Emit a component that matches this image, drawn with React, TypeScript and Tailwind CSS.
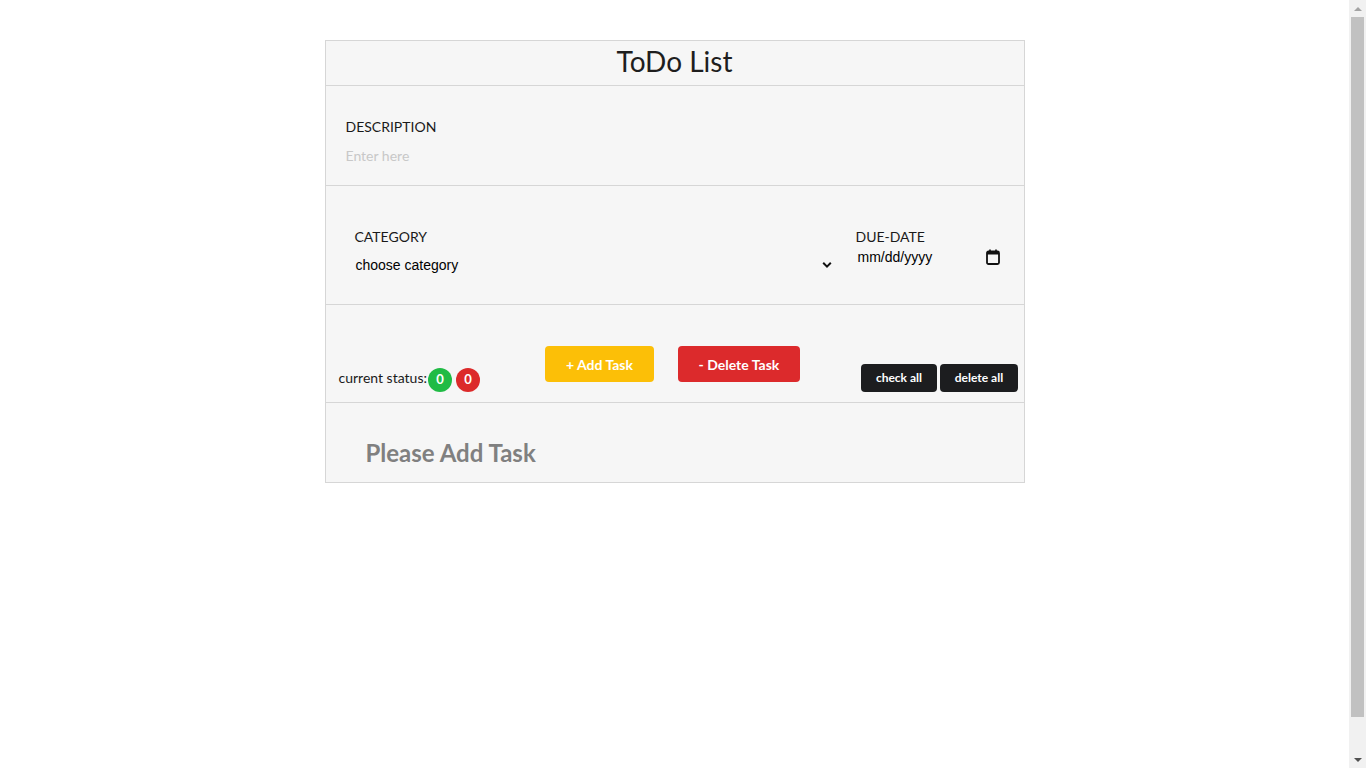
import React from "react";

export default function App() {
  return (
    <div className="flex h-screen overflow-hidden bg-white" style={{ fontFamily: "Lato, 'Liberation Sans', sans-serif" }}>
      <div className="w-[1349px] shrink-0 pt-10">
        <div className="mx-auto w-[700px] border border-[#d6d6d6] bg-[#f6f6f6] text-[#222]">
          {/* Header */}
          <div className="flex h-[45px] items-center justify-center border-b border-[#d6d6d6]">
            <h1 className="-mt-[4px] text-[28px] leading-none text-[#1e1e1e]">ToDo List</h1>
          </div>

          {/* Description */}
          <div className="h-[100px] border-b border-[#d6d6d6] pl-[20px] pt-[31px]">
            <label className="block text-[14px] leading-[20px] text-[#1a1a1a]">DESCRIPTION</label>
            <input
              className="mt-[8px] block h-[20px] w-[640px] bg-transparent text-[14px] outline-none placeholder:text-[#c8c8c8]"
              placeholder="Enter here"
            />
          </div>

          {/* Category / Due date */}
          <div className="flex h-[119px] border-b border-[#d6d6d6] pt-[41px]">
            <div className="ml-[29px] w-[488px]">
              <label className="block text-[14px] leading-[20px] text-[#1a1a1a]">CATEGORY</label>
              <div className="relative mt-[8px] flex h-[20px] items-center">
                <span
                  className="pl-[1px] text-[14px] text-black"
                  style={{ fontFamily: "'Liberation Sans', Arial, sans-serif" }}
                >
                  choose category
                </span>
                <svg
                  className="absolute left-[467px] top-[6px]"
                  width="10"
                  height="8"
                  viewBox="0 0 10 8"
                  fill="none"
                >
                  <path d="M1.2 1.8 L5 5.6 L8.8 1.8" stroke="#111" strokeWidth="2" />
                </svg>
              </div>
            </div>
            <div className="ml-[13px]">
              <label className="block text-[14px] leading-[20px] text-[#1a1a1a]">DUE-DATE</label>
              <div className="flex h-[20px] w-[144px] items-center justify-between">
                <span
                  className="pl-[2px] text-[14px] text-black"
                  style={{ fontFamily: "'Liberation Sans', Arial, sans-serif" }}
                >
                  mm/dd/yyyy
                </span>
                <svg width="14" height="16" viewBox="0 0 14 16" fill="none">
                  <rect x="1" y="2.5" width="12" height="12.5" rx="1.5" stroke="#111" strokeWidth="1.8" />
                  <rect x="1" y="2.5" width="12" height="3" fill="#111" />
                  <rect x="3.2" y="0.5" width="1.6" height="3" fill="#111" />
                  <rect x="9.2" y="0.5" width="1.6" height="3" fill="#111" />
                </svg>
              </div>
            </div>
          </div>

          {/* Buttons row */}
          <div className="flex h-[98px] items-end border-b border-[#d6d6d6] pb-[10px]">
            <div className="ml-[13px] flex items-center">
              <span className="-mt-[5px] text-[14px] text-[#1a1a1a]">current status:</span>
              <span className="ml-[1px] flex h-[24px] w-[24px] items-center justify-center rounded-full bg-[#20bb45] text-[13px] font-bold text-white">
                0
              </span>
              <span className="ml-[4px] flex h-[24px] w-[24px] items-center justify-center rounded-full bg-[#dc2a2a] text-[13px] font-bold text-white">
                0
              </span>
            </div>
            <button className="mb-[10px] ml-[65px] h-[36px] w-[109px] rounded-[4px] bg-[#fcbf07] text-[14px] font-bold text-white">
              + Add Task
            </button>
            <button className="mb-[10px] ml-[24px] h-[36px] w-[122px] rounded-[4px] bg-[#dc2a2c] text-[14px] font-bold text-white">
              - Delete Task
            </button>
            <button className="ml-[61px] h-[28px] w-[76px] rounded-[4px] bg-[#1c1d1f] text-[12px] font-bold text-white">
              check all
            </button>
            <button className="ml-[3px] h-[28px] w-[78px] rounded-[4px] bg-[#1c1d1f] text-[12px] font-bold text-white">
              delete all
            </button>
          </div>

          {/* Task list */}
          <div className="flex h-[79px] items-center pl-[40px] pt-[22px]">
            <h2 className="-mt-[2px] text-[24px] font-bold leading-none text-[#808080]">Please Add Task</h2>
          </div>
        </div>
      </div>

      {/* Scrollbar */}
      <div className="flex w-[17px] shrink-0 flex-col items-center bg-[#f1f1f1]">
        <div className="flex h-[17px] w-full items-center justify-center">
          <svg width="8" height="4" viewBox="0 0 8 4">
            <path d="M0 4 L4 0 L8 4 Z" fill="#a3a3a3" />
          </svg>
        </div>
        <div className="w-[13px] flex-1 bg-[#c1c1c1]" />
        <div className="h-[34px] w-full" />
        <div className="flex h-[17px] w-full items-center justify-center">
          <svg width="8" height="4" viewBox="0 0 8 4">
            <path d="M0 0 L4 4 L8 0 Z" fill="#505050" />
          </svg>
        </div>
      </div>
    </div>
  );
}
